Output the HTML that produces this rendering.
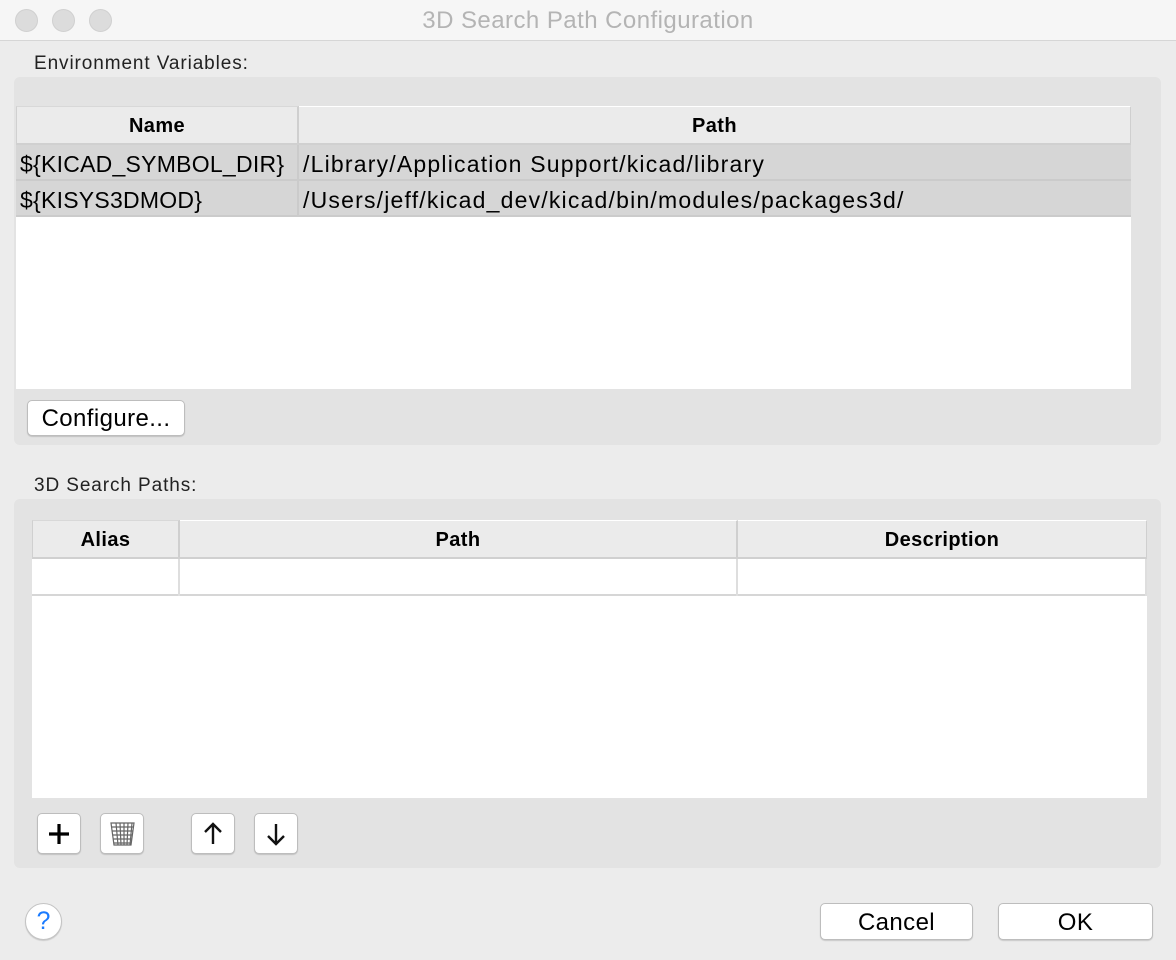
<!DOCTYPE html>
<html><head><style>
*{box-sizing:border-box;margin:0;padding:0}
body{width:1176px;height:960px;background:#ececec;font-family:"Liberation Sans",sans-serif;position:relative;overflow:hidden;color:#000}
.a{position:absolute}
.title{left:0;top:0;width:1176px;height:41px;background:#f6f6f6;border-bottom:1px solid #d6d6d6;text-align:center;font-size:24px;color:#b4b4b4;line-height:42px;letter-spacing:0.45px}
.dot{width:23px;height:23px;border-radius:50%;background:#dcdcdc;border:1px solid #d0d0d0;top:9px}
.lbl{font-size:19px;color:#222;letter-spacing:0.9px}
.grp{background:#e3e3e3;border-radius:6px}
.hd{background:#ebebeb;border-bottom:2px solid #d0d0d0;font-weight:bold;font-size:20px;text-align:center;line-height:38px;border-right:2px solid #cfcfcf;letter-spacing:0.4px}
.row{background:#d6d6d6;border-bottom:2px solid #cbcbcb;font-size:23px;line-height:38px;padding-left:4px;white-space:nowrap;letter-spacing:0.25px}
.p{letter-spacing:1.2px}
.btn{background:#fff;border:1px solid #bdbdbd;border-radius:5px;box-shadow:0 1px 1px rgba(0,0,0,.15);font-size:24px;text-align:center;letter-spacing:0.4px}
</style></head><body>
<div class="a title">3D Search Path Configuration</div>
<div class="a dot" style="left:15px"></div>
<div class="a dot" style="left:52px"></div>
<div class="a dot" style="left:89px"></div>

<div class="a lbl" style="left:34px;top:53px">Environment Variables:</div>
<div class="a grp" style="left:14px;top:77px;width:1147px;height:368px"></div>
<div class="a" style="left:16px;top:106px;width:1115px;height:283px;background:#fff"></div>
<div class="a hd" style="left:16px;top:106px;width:283px;height:39px;border-top:1px solid #d8d8d8;border-left:1px solid #d0d0d0">Name</div>
<div class="a hd" style="left:299px;top:106px;width:832px;height:39px;border-top:1px solid #fff;border-right:1px solid #cfcfcf">Path</div>
<div class="a row" style="left:16px;top:145px;width:283px;height:36px;border-right:2px solid #cbcbcb">${KICAD_SYMBOL_DIR}</div>
<div class="a row p" style="left:299px;top:145px;width:832px;height:36px">/Library/Application Support/kicad/library</div>
<div class="a row" style="left:16px;top:181px;width:283px;height:36px;border-right:2px solid #cbcbcb">${KISYS3DMOD}</div>
<div class="a row p" style="left:299px;top:181px;width:832px;height:36px">/Users/jeff/kicad_dev/kicad/bin/modules/packages3d/</div>
<div class="a btn" style="left:27px;top:400px;width:158px;height:36px;line-height:36px">Configure...</div>

<div class="a lbl" style="left:34px;top:475px">3D Search Paths:</div>
<div class="a grp" style="left:14px;top:499px;width:1147px;height:369px"></div>
<div class="a" style="left:32px;top:520px;width:1115px;height:278px;background:#fff"></div>
<div class="a hd" style="left:32px;top:520px;width:148px;height:39px;border-top:1px solid #d8d8d8;border-left:1px solid #d0d0d0">Alias</div>
<div class="a hd" style="left:180px;top:520px;width:558px;height:39px;border-top:1px solid #fff">Path</div>
<div class="a hd" style="left:738px;top:520px;width:409px;height:39px;border-top:1px solid #fff;border-right:1px solid #cfcfcf">Description</div>
<div class="a" style="left:32px;top:559px;width:1115px;height:37px;border-bottom:2px solid #d6d6d6"></div>
<div class="a" style="left:178px;top:559px;width:2px;height:37px;background:#dedede"></div>
<div class="a" style="left:736px;top:559px;width:2px;height:37px;background:#dedede"></div>
<div class="a" style="left:1145px;top:559px;width:2px;height:37px;background:#dedede"></div>

<div class="a btn" style="left:37px;top:813px;width:44px;height:41px"><svg width="44" height="41"><path d="M21 10v20M11 20h20" stroke="#000" stroke-width="3.2"/></svg></div>
<div class="a btn" style="left:100px;top:813px;width:44px;height:41px"><svg width="44" height="41"><g stroke="#666" stroke-width="1.2" fill="none"><path d="M10 9h23l-3 22H13z"/><path d="M11 13h21M11.5 17h20M12 21h19M12.5 25h18M13 29h17M15 9l2 22M19 9l1 22M23 9v22M27 9l-1 22M31 9l-2 22"/></g></svg></div>
<div class="a btn" style="left:191px;top:813px;width:44px;height:41px"><svg width="44" height="41"><path d="M21 30V10M13 18l8-8 8 8" stroke="#111" stroke-width="2.4" fill="none"/></svg></div>
<div class="a btn" style="left:254px;top:813px;width:44px;height:41px"><svg width="44" height="41"><path d="M21 10v20M13 22l8 8 8-8" stroke="#111" stroke-width="2.4" fill="none"/></svg></div>

<div class="a" style="left:25px;top:903px;width:37px;height:37px;border-radius:50%;background:#fff;border:1px solid #c4c4c4;box-shadow:0 1px 1px rgba(0,0,0,.15);color:#1a7bff;font-size:25px;text-align:center;line-height:35px">?</div>
<div class="a btn" style="left:820px;top:903px;width:153px;height:37px;line-height:37px">Cancel</div>
<div class="a btn" style="left:998px;top:903px;width:155px;height:37px;line-height:37px">OK</div>
</body></html>
